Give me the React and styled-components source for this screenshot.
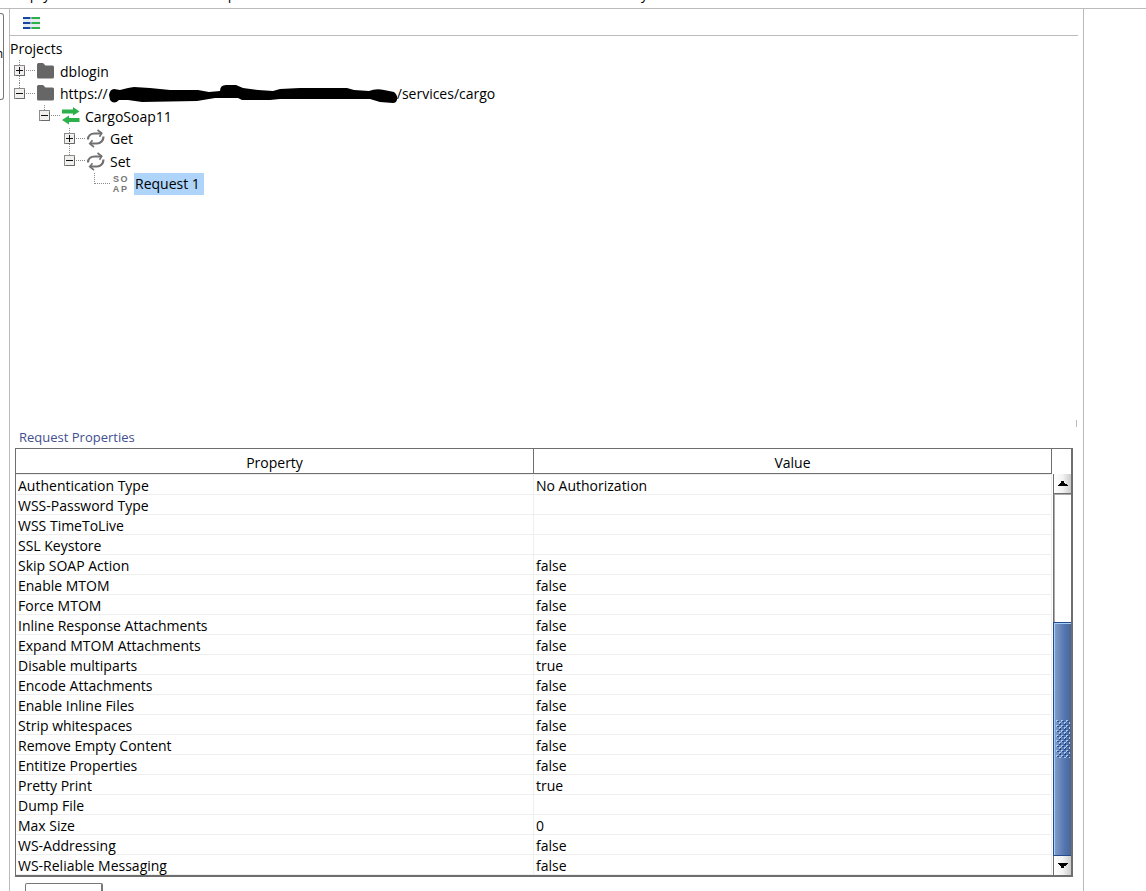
import React from "react";
import styled, { createGlobalStyle } from "styled-components";

const TREE = [
  { name: "dblogin", depth: 0, icon: "folder", open: false, more: true },
  { name: "https://", tail: "/services/cargo", depth: 0, icon: "folder", open: true },
  { name: "CargoSoap11", depth: 1, icon: "interface", open: true },
  { name: "Get", depth: 2, icon: "operation", open: false, more: true },
  { name: "Set", depth: 2, icon: "operation", open: true },
  { name: "Request 1", depth: 3, icon: "soap", leaf: true, selected: true },
];

const PROPERTIES = [
  ["Authentication Type", "No Authorization"],
  ["WSS-Password Type", ""],
  ["WSS TimeToLive", ""],
  ["SSL Keystore", ""],
  ["Skip SOAP Action", "false"],
  ["Enable MTOM", "false"],
  ["Force MTOM", "false"],
  ["Inline Response Attachments", "false"],
  ["Expand MTOM Attachments", "false"],
  ["Disable multiparts", "true"],
  ["Encode Attachments", "false"],
  ["Enable Inline Files", "false"],
  ["Strip whitespaces", "false"],
  ["Remove Empty Content", "false"],
  ["Entitize Properties", "false"],
  ["Pretty Print", "true"],
  ["Dump File", ""],
  ["Max Size", "0"],
  ["WS-Addressing", "false"],
  ["WS-Reliable Messaging", "false"],
];

const ICONS = {
  folder: (
    <path d="M1 2.500Q1 1 2.500 1H7L9.500 3.500H16.500Q18 3.500 18 5V15Q18 16.500 16.500 16.500H2.500Q1 16.500 1 15Z" fill="#666" />
  ),
  interface: (
    <path
      d="M1 2.500H12V0L18.500 4.500L12 8.500V6.500H1ZM18.500 11H8V8.500L1 13L8 17.500V15H18.500Z"
      fill="#2bb04a"
    />
  ),
  operation: (
    <g fill="none" stroke="#707070" strokeWidth="2.200">
      <path d="M2 10.500C2 6.500 5 4.500 8.500 4.500H15" />
      <path d="M11.500 1L15.800 4.300L13.500 7.800" strokeWidth="1.600" />
      <path d="M17.500 7.500C17.500 11.500 14.500 14.500 11 14.500H4.500" />
      <path d="M6.500 11.200L3.700 14.700L8 18" strokeWidth="1.600" />
    </g>
  ),
};

const Guide = ({ leaf, open, more }) => (
  <GuideSvg width="26" height="23" viewBox="0 0 26 23">
    <g stroke="#8a8a8a" strokeDasharray="1 1">
      <path d={more ? "M9.500 0V23" : "M9.500 0V11"} />
      <path d="M10 10.500H25" />
    </g>
    {!leaf && (
      <>
        <rect x="4.500" y="5.500" width="10" height="10" fill="#f1f0ee" stroke="#8c8c8c" />
        <path d="M14.500 7V15.500H6" fill="none" stroke="#6a6a6a" />
        <path d={open ? "M6 10.500H13" : "M6 10.500H13M9.500 7V14"} stroke="#111" />
      </>
    )}
  </GuideSvg>
);

// marker stroke that hides the host name
const Scribble = () => (
  <ScribbleSvg width="289" height="22" viewBox="108 83 289 22">
    <path
      d="M109 95Q110 89 114 89L120 90L128 88L134 87L150 88L170 90L198 90L209 92L220 91Q220 85 226 85H236L243 88L258 90L273 91L280 89L300 88H347L354 90L369 91Q376 88 384 90L394 92Q398 95 397 100Q396 103 393 103L380 102L370 99H280L270 100H242L238 98H215L197 101L142 102L128 100H119Q114 105 110 100Z"
      fill="#000"
    />
  </ScribbleSvg>
);

const TreeIcon = ({ type }) =>
  type === "soap" ? (
    <SoapIcon>
      <span>S</span>
      <span>O</span>
      <span>A</span>
      <span>P</span>
    </SoapIcon>
  ) : (
    <IconSvg width="20" height="20" viewBox="0 0 20 20">
      {ICONS[type]}
    </IconSvg>
  );

const Grip = () => (
  <svg width="14" height="38" viewBox="0 0 14 38">
    <defs>
      <pattern id="grip" width="5" height="5" patternUnits="userSpaceOnUse">
        <path d="M0 0H2V1H1V2H0ZM3 2H5V3H4V4H3Z" fill="#a9c8ee" />
        <path d="M2 1H3V2H1V1ZM4 3H5V5H3V4H4Z" fill="#27498b" />
      </pattern>
    </defs>
    <rect width="14" height="38" fill="url(#grip)" />
  </svg>
);

const App = () => {
  return (
    <>
      <GlobalStyle />
      <Window>
        <MainToolbar>
          <ToolLabel $width={202}>Empty</ToolLabel>
          <ToolLabel $width={400}>Import</ToolLabel>
          <ToolLabel $width={60}>Proxy</ToolLabel>
        </MainToolbar>
        <Body>
          <Rail>
            <RailTab aria-label="Navigator">n</RailTab>
          </Rail>
          <Navigator>
            <NavToolbar>
              <IconButton aria-label="Collapse all">
                <svg width="17" height="12" viewBox="0 0 17 12">
                  <path d="M0 2H17V5H0ZM0 7H17V10H0Z" fill="#e6edf0" />
                  <path d="M0 0H7V2H0ZM0 5H7V7H0ZM0 10H7V12H0Z" fill="#17479e" />
                  <path d="M7 0H9V2H7ZM7 5H9V7H7ZM7 10H9V12H7Z" fill="#8aa9c4" />
                  <path d="M9 0H17V2H9ZM9 5H17V7H9ZM9 10H17V12H9Z" fill="#2bb04a" />
                </svg>
              </IconButton>
            </NavToolbar>
            <Tree role="tree">
              <Root role="treeitem">Projects</Root>
              {TREE.map((node) => (
                <Node key={node.name} role="treeitem" $depth={node.depth}>
                  <Guide {...node} />
                  <TreeIcon type={node.icon} />
                  <Label $selected={node.selected}>
                    {node.name}
                    {node.tail && <Scribble />}
                    {node.tail}
                  </Label>
                </Node>
              ))}
            </Tree>
            <Splitter />
            <Title>Request Properties</Title>
            <TablePane>
              <Table>
                <thead>
                  <tr>
                    <Th>Property</Th>
                    <Th>Value</Th>
                  </tr>
                </thead>
                <tbody>
                  {PROPERTIES.map(([name, value]) => (
                    <tr key={name}>
                      <Td>{name}</Td>
                      <Td>{value}</Td>
                    </tr>
                  ))}
                </tbody>
              </Table>
              <Scrollbar>
                <ScrollButton aria-label="Scroll up">
                  <svg width="10" height="5" viewBox="0 0 10 5">
                    <path d="M0 5V4H1V3H2V2H3V0H6V2H7V3H9V4H10V5Z" />
                  </svg>
                </ScrollButton>
                <Track />
                <Thumb>
                  <Grip />
                </Thumb>
                <ScrollButton aria-label="Scroll down">
                  <svg width="10" height="5" viewBox="0 0 10 5">
                    <path d="M0 0V1H1V2H2V3H3V5H6V3H8V2H9V1H10V0Z" />
                  </svg>
                </ScrollButton>
              </Scrollbar>
            </TablePane>
            <Footer>
              <FooterTab aria-label="Properties" />
            </Footer>
          </Navigator>
          <Desktop />
        </Body>
      </Window>
    </>
  );
};

const GlobalStyle = createGlobalStyle`
  * {
    box-sizing: border-box;
  }

  body {
    margin: 0;
    background: #fff;
    color: #000;
    font-family: "Open Sans", "Noto Sans", sans-serif;
    font-size: 14px;
    line-height: 20px;
  }

  button {
    padding: 0;
    border: none;
    background: none;
    color: inherit;
    font: inherit;
  }
`;

const Window = styled.div`
  display: flex;
  flex-direction: column;
  height: 100vh;
  overflow: hidden;
`;

const MainToolbar = styled.div`
  display: flex;
  flex: none;
  align-items: flex-end;
  height: 9px;
  padding: 0 0 4px 9px;
  border-bottom: 1px solid #bbb;
  overflow: hidden;
`;

const ToolLabel = styled.button`
  flex: none;
  width: ${(props) => props.$width}px;
  height: 20px;
  text-align: left;
`;

const Body = styled.div`
  display: flex;
  flex: 1;
  min-height: 0;
`;

const Rail = styled.div`
  flex: none;
  width: 10px;
  padding-top: 4px;
  border-right: 1px solid #bbb;
`;

const RailTab = styled.button`
  display: flex;
  justify-content: flex-end;
  align-items: center;
  width: 4px;
  height: 87px;
  padding-bottom: 6px;
  border: 1px solid #777;
  border-left: none;
  border-radius: 0 3px 3px 0;
  font-size: 12px;
  overflow: hidden;
`;

const Navigator = styled.div`
  display: flex;
  flex: 1;
  flex-direction: column;
  min-width: 0;
  border-right: 1px solid #bbb;
`;

const Desktop = styled.div`
  flex: none;
  width: 62px;
`;

const NavToolbar = styled.div`
  display: flex;
  flex: none;
  align-items: center;
  height: 27px;
  margin-right: 5px;
  padding: 2px 0 0 13px;
  border-bottom: 1px solid #bbb;
`;

const IconButton = styled.button`
  display: flex;
`;

const Tree = styled.ul`
  flex: 1;
  min-height: 0;
  margin: 0;
  padding: 1px 0 0;
  list-style: none;
  overflow: hidden;
`;

const Root = styled.li`
  height: 23px;
  line-height: 23px;
`;

const Node = styled.li`
  display: flex;
  align-items: center;
  height: 22px;
  padding-left: ${(props) => props.$depth * 25}px;

  &:nth-child(even) {
    height: 23px;
  }
`;

const GuideSvg = styled.svg`
  flex: none;
  align-self: flex-start;
`;

const IconSvg = styled.svg`
  flex: none;
  margin-right: 3px;
`;

const SoapIcon = styled.span`
  display: grid;
  flex: none;
  grid-template-columns: 8px 8px;
  grid-template-rows: 10px 10px;
  width: 17px;
  margin: 0 5px 0 1px;
  color: #777;
  font-family: "Liberation Sans", sans-serif;
  font-size: 9px;
  font-weight: bold;
  line-height: 10px;
  text-align: center;
`;

const Label = styled.span`
  display: flex;
  align-items: center;
  height: 22px;
  padding: 0 4px 0 1px;
  background: ${(props) => (props.$selected ? "#aed4f9" : "transparent")};
  white-space: nowrap;
`;

const ScribbleSvg = styled.svg`
  flex: none;
`;

const Splitter = styled.div`
  flex: none;
  align-self: flex-end;
  width: 1px;
  height: 7px;
  margin-right: 6px;
  background: #bbb;
`;

const Title = styled.div`
  flex: none;
  height: 21px;
  padding-left: 9px;
  color: #424f8f;
  font-size: 13px;
`;

const TablePane = styled.div`
  display: flex;
  flex: none;
  margin: 0 10px 0 5px;
  border: solid #6e6e6e;
  border-width: 1px 2px 2px 1px;
`;

const Table = styled.table`
  flex: 1;
  width: 100%;
  min-width: 0;
  border-collapse: separate;
  border-spacing: 0;
  table-layout: fixed;
`;

const Th = styled.th`
  height: 25px;
  padding: 4px 0 0;
  border: solid #6e6e6e;
  border-width: 0 1px 1px 0;
  font-weight: normal;
`;

const Td = styled.td`
  height: 20px;
  padding: 2px 2px 0;
  border: solid #eee;
  border-width: 0 1px 1px 0;
  line-height: 17px;
  white-space: nowrap;

  tr:first-child > & {
    height: 21px;
    border-top-width: 1px;
  }
`;

const Scrollbar = styled.div`
  display: flex;
  flex: none;
  flex-direction: column;
  width: 18px;
  margin: 25px 0 0 1px;
`;

const ScrollButton = styled.button`
  display: flex;
  flex: none;
  align-items: center;
  justify-content: center;
  height: 19px;
  border-left: 1px solid #6e6e6e;
  background: linear-gradient(90deg, #fff, #f3f3f3 50%, #ccc);
`;

const Track = styled.div`
  flex: 1;
  border: solid #6e6e6e;
  border-width: 1px 0 0 1px;
  box-shadow: inset 1px 1px 0 #aaa;
`;

const Thumb = styled.div`
  display: flex;
  flex: none;
  align-items: center;
  justify-content: center;
  height: 234px;
  border: solid #254a8e;
  border-width: 1px 0 1px 1px;
  background: linear-gradient(90deg, #859fcb, #5576b0 60%, #486698);
  box-shadow: inset 1px 1px 0 #a5d0f8;
`;

const Footer = styled.div`
  flex: none;
  height: 14px;
  padding: 6px 0 0 15px;
  overflow: hidden;
`;

const FooterTab = styled.button`
  display: block;
  width: 78px;
  height: 24px;
  border: solid #777;
  border-width: 1px 2px 2px 1px;
  border-radius: 2px;
`;

export default App;
